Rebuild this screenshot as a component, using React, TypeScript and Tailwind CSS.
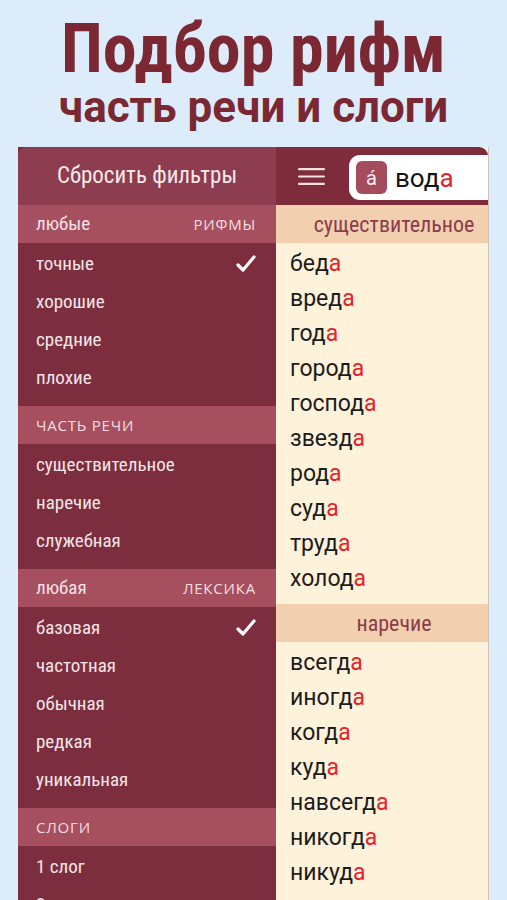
import React from "react";

const cond = "[font-family:'Roboto_Condensed','DejaVu_Sans_Condensed','Liberation_Sans_Narrow',sans-serif]";

type Section = { left: string; right?: string; upper?: boolean; rows: { label: string; checked?: boolean }[] };

const sections: Section[] = [
  {
    left: "любые",
    right: "РИФМЫ",
    rows: [{ label: "точные", checked: true }, { label: "хорошие" }, { label: "средние" }, { label: "плохие" }],
  },
  {
    left: "ЧАСТЬ РЕЧИ",
    upper: true,
    rows: [{ label: "существительное" }, { label: "наречие" }, { label: "служебная" }],
  },
  {
    left: "любая",
    right: "ЛЕКСИКА",
    rows: [
      { label: "базовая", checked: true },
      { label: "частотная" },
      { label: "обычная" },
      { label: "редкая" },
      { label: "уникальная" },
    ],
  },
  {
    left: "СЛОГИ",
    upper: true,
    rows: [{ label: "1 слог" }, { label: "2 слога" }],
  },
];

const groups = [
  {
    title: "существительное",
    words: ["бед", "вред", "год", "город", "господ", "звезд", "род", "суд", "труд", "холод"],
  },
  {
    title: "наречие",
    words: ["всегд", "иногд", "когд", "куд", "навсегд", "никогд", "никуд"],
  },
];

function Check() {
  return (
    <svg width="20" height="18" viewBox="0 0 20 18" fill="none">
      <path d="M2 10l5 5L18 2" stroke="#ffffff" strokeWidth="3.2" strokeLinecap="round" strokeLinejoin="round" />
    </svg>
  );
}

const upperLabel = "[font-family:'Open_Sans',sans-serif] text-[15px] tracking-[0.8px] text-[#f5dfe2]";

function FilterPanel() {
  return (
    <div className="flex w-[258px] shrink-0 flex-col bg-[#7c2d3e]">
      <div className={`flex h-[58px] shrink-0 items-center justify-center rounded-tl-[9px] bg-[#8e3c4f] text-[23px] text-[#f7e9eb] ${cond}`}>
        Сбросить фильтры
      </div>
      {sections.map((s) => (
        <div key={s.left} className="shrink-0">
          <div className="flex h-[38px] items-center justify-between bg-[#a64f5f] pl-[18px] pr-[20px]">
            {s.upper ? (
              <span className={upperLabel}>{s.left}</span>
            ) : (
              <span className={`text-[19px] text-[#f5e3e6] ${cond}`}>{s.left}</span>
            )}
            {s.right && <span className={upperLabel}>{s.right}</span>}
          </div>
          <div className="pt-[2px] pb-[9px]">
            {s.rows.map((r) => (
              <div key={r.label} className="flex h-[38px] items-center justify-between pl-[18px] pr-[20px]">
                <span className={`text-[19px] text-[#f4e6e8] ${cond}`}>{r.label}</span>
                {r.checked && <Check />}
              </div>
            ))}
          </div>
        </div>
      ))}
    </div>
  );
}

function ResultsPanel() {
  return (
    <div className="flex min-w-0 flex-1 flex-col border-r border-[#c9c4bc] bg-[#fef2da]">
      <div className="flex h-[58px] shrink-0 items-start rounded-tr-[9px] bg-[#7e2b3c]">
        <svg className="ml-[22px] mt-[21px] shrink-0" width="27" height="17" viewBox="0 0 27 17">
          <rect x="0" y="0" width="27" height="2.2" rx="1" fill="#f3e1e4" />
          <rect x="0" y="7.4" width="27" height="2.2" rx="1" fill="#f3e1e4" />
          <rect x="0" y="14.8" width="27" height="2.2" rx="1" fill="#f3e1e4" />
        </svg>
        <div className="ml-[24px] mt-[8px] flex h-[45px] flex-1 items-center rounded-l-[11px] bg-white pl-[7px]">
          <div className="flex h-[33px] w-[31px] shrink-0 items-center justify-center rounded-[6px] bg-[#a44c5d] text-[20px] text-[#fbeef0] [font-family:Roboto,sans-serif]">
            á
          </div>
          <span className="ml-[8px] text-[26px] leading-none text-[#151515] [font-family:Roboto,sans-serif]">
            вод<span className="text-[#e8222b]">а</span>
          </span>
        </div>
      </div>
      {groups.map((g) => (
        <div key={g.title} className="shrink-0">
          <div className={`flex h-[38px] items-center justify-center bg-[#f2cfae] pl-[24px] text-[22px] text-[#8a3c4b] ${cond}`}>
            {g.title}
          </div>
          <div className="pt-[4px] pb-[7px]">
            {g.words.map((w) => (
              <div key={w} className="flex h-[35px] items-center pl-[14px] text-[23px] text-[#1c1c1c] [font-family:Roboto,sans-serif]">
                <span>
                  {w}
                  <span className="text-[#e8222b]">а</span>
                </span>
              </div>
            ))}
          </div>
        </div>
      ))}
    </div>
  );
}

export default function App() {
  return (
    <div className="flex h-[900px] w-[507px] flex-col items-center overflow-hidden bg-[#ddecfb]">
      <h1 className={`mt-[15px] shrink-0 text-[68px] font-bold leading-none text-[#7b2833] ${cond}`}>Подбор рифм</h1>
      <h2 className="mt-[2px] shrink-0 text-[44px] font-bold leading-none text-[#7b2833] [font-family:Roboto,sans-serif]">
        часть речи и слоги
      </h2>
      <div className="mt-[18px] ml-[18px] flex min-h-0 w-[471px] flex-1 self-start overflow-hidden">
        <FilterPanel />
        <ResultsPanel />
      </div>
    </div>
  );
}
